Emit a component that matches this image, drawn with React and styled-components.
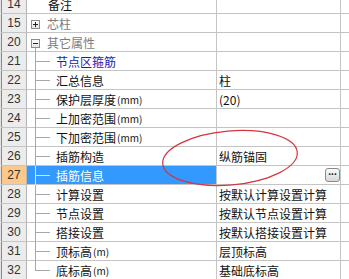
import React from "react";
import styled, { createGlobalStyle, css } from "styled-components";

const colors = {
  grid: "#c4c4c4",
  gutter: "#ececec",
  gutterActive: "#fcc98a",
  edge: "#8a8a8a",
  tree: "#a8a8a8",
  group: "#7c7c7c",
  link: "#1c1cb4",
  selected: "#3399ff",
  ink: "#111",
  mark: "#d6343e",
};

const GlobalStyle = createGlobalStyle`
  html, body {
    margin: 0;
    padding: 0;
    background: #fff;
    overflow: hidden;
  }
  body {
    font-family: "Noto Sans CJK SC", "Liberation Sans", sans-serif;
    font-size: 12px;
    color: ${colors.ink};
  }
`;

const Frame = styled.div`
  position: relative;
  width: 349px;
  height: 279px;
  overflow: hidden;
  border-left: 1px solid #e2e2e2;
  box-sizing: border-box;
`;

const Grid = styled.div`
  display: flex;
  flex-direction: column;
  margin-top: -5px;
`;

const Row = styled.div`
  display: flex;
  height: 19px;
  box-sizing: border-box;
  border-bottom: 1px solid ${colors.grid};
`;

const NumCell = styled.div`
  width: 24px;
  flex: none;
  box-sizing: content-box;
  border-left: 1px solid ${colors.edge};
  border-right: 1px solid #b4b4b4;
  background: ${(p) => (p.$active ? colors.gutterActive : colors.gutter)};
  display: flex;
  align-items: center;
  justify-content: center;
  font-family: "Liberation Sans", Arial, sans-serif;
  font-size: 12px;
  color: #333;
`;

const LabelCell = styled.div`
  width: 190px;
  flex: none;
  border-right: 1px solid ${colors.grid};
  display: flex;
  align-items: center;
  white-space: nowrap;
  background: ${(p) => (p.$selected ? colors.selected : "transparent")};
  color: ${(p) =>
    p.$selected
      ? "#fff"
      : p.$tone === "group"
      ? colors.group
      : p.$tone === "link"
      ? colors.link
      : colors.ink};
  padding-left: ${(p) => p.$indent || 0}px;
  box-sizing: border-box;
`;

const ValueCell = styled.div`
  width: 124px;
  flex: none;
  border-right: 1px solid ${colors.grid};
  display: flex;
  align-items: center;
  padding-left: 2px;
  box-sizing: border-box;
  white-space: nowrap;
`;

const Filler = styled.div`
  flex: 1;
`;

const Unit = styled.span`
  font-size: 10px;
  margin-left: 1px;
`;

const Expander = styled.span`
  position: relative;
  width: 9px;
  height: 9px;
  box-sizing: border-box;
  border: 1px solid #8c8c8c;
  background: linear-gradient(#ffffff, #e4e4e4);
  margin-right: 7px;
  margin-top: 2px;
  flex: none;

  &::before {
    content: "";
    position: absolute;
    left: 1px;
    right: 1px;
    top: 3px;
    height: 1px;
    background: #222;
  }

  ${(p) =>
    !p.$open &&
    css`
      &::after {
        content: "";
        position: absolute;
        top: 1px;
        bottom: 1px;
        left: 3px;
        width: 1px;
        background: #222;
      }
    `}

  ${(p) =>
    p.$open &&
    css`
      &::after {
        content: "";
        position: absolute;
        left: 3px;
        top: 8px;
        height: 7px;
        width: 1px;
        background: ${colors.tree};
      }
    `}
`;

const Guide = styled.span`
  position: relative;
  align-self: stretch;
  width: 29px;
  flex: none;

  &::before {
    content: "";
    position: absolute;
    left: 8px;
    top: 0;
    width: 1px;
    height: ${(p) => (p.$last ? "50%" : "19px")};
    background: ${(p) => (p.$light ? "#cfe6ff" : colors.tree)};
  }

  &::after {
    content: "";
    position: absolute;
    left: 8px;
    width: 15px;
    top: 9px;
    height: 1px;
    background: ${(p) => (p.$light ? "#cfe6ff" : colors.tree)};
  }
`;

const DotsButton = styled.button`
  margin-left: auto;
  margin-right: 0;
  width: 15px;
  height: 14px;
  padding: 0;
  border: 1px solid #8a8a8a;
  border-radius: 3px;
  background: linear-gradient(#fafafa, #d8d8d8);
  font-family: "Liberation Sans", Arial, sans-serif;
  font-size: 10px;
  font-weight: bold;
  line-height: 8px;
  color: #111;
  display: flex;
  align-items: center;
  justify-content: center;
  letter-spacing: -0.5px;
`;

const Mark = styled.svg`
  position: absolute;
  left: 0;
  top: 0;
  pointer-events: none;
`;

const rows = [
  { n: 14, label: "备注", kind: "plain" },
  { n: 15, label: "芯柱", kind: "group" },
  { n: 20, label: "其它属性", kind: "group", open: true },
  { n: 21, label: "节点区箍筋", tone: "link" },
  { n: 22, label: "汇总信息", value: "柱" },
  { n: 23, label: "保护层厚度", unit: "(mm)", value: "(20)" },
  { n: 24, label: "上加密范围", unit: "(mm)" },
  { n: 25, label: "下加密范围", unit: "(mm)" },
  { n: 26, label: "插筋构造", value: "纵筋锚固" },
  { n: 27, label: "插筋信息", selected: true, button: true },
  { n: 28, label: "计算设置", value: "按默认计算设置计算" },
  { n: 29, label: "节点设置", value: "按默认节点设置计算" },
  { n: 30, label: "搭接设置", value: "按默认搭接设置计算" },
  { n: 31, label: "顶标高", unit: "(m)", value: "层顶标高" },
  { n: 32, label: "底标高", unit: "(m)", value: "基础底标高", last: true },
];

const Label = ({ row }) => {
  if (row.kind === "plain") {
    return <LabelCell $indent={21}>{row.label}</LabelCell>;
  }

  if (row.kind === "group") {
    return (
      <LabelCell $indent={4} $tone="group">
        <Expander $open={row.open} />
        {row.label}
      </LabelCell>
    );
  }

  return (
    <LabelCell $tone={row.tone} $selected={row.selected}>
      <Guide $last={row.last} $light={row.selected} />
      {row.label}
      {row.unit && <Unit>{row.unit}</Unit>}
    </LabelCell>
  );
};

const App = () => {
  return (
    <>
      <GlobalStyle />
      <Frame>
        <Grid>
          {rows.map((row) => (
            <Row key={row.n}>
              <NumCell $active={row.selected}>{row.n}</NumCell>
              <Label row={row} />
              <ValueCell>
                {row.value}
                {row.button && <DotsButton>···</DotsButton>}
              </ValueCell>
              <Filler />
            </Row>
          ))}
        </Grid>

        {/* hand-drawn annotation */}
        <Mark width="349" height="279">
          <ellipse
            cx="229"
            cy="158"
            rx="67.5"
            ry="27"
            transform="rotate(-5 229 158)"
            fill="none"
            stroke={colors.mark}
            strokeWidth="1.2"
          />
        </Mark>
      </Frame>
    </>
  );
};

export default App;
